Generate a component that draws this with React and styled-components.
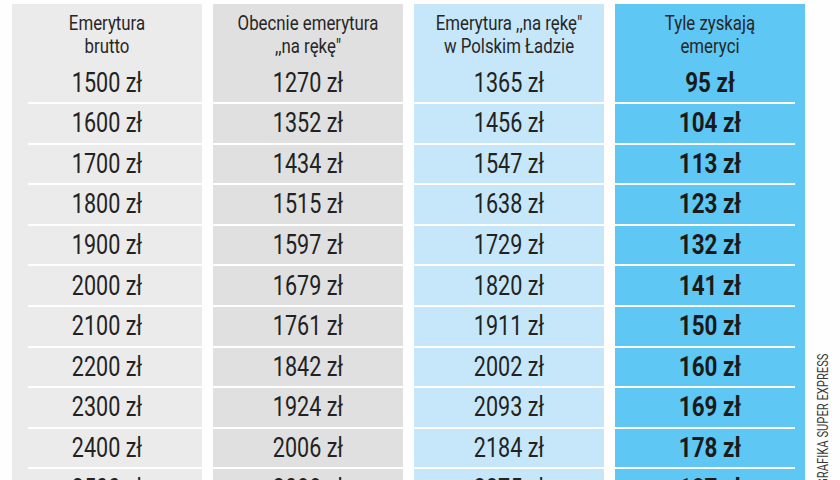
import React from "react";
import styled, { createGlobalStyle } from "styled-components";

const Global = createGlobalStyle`
  html, body {
    margin: 0;
    padding: 0;
    background: #fefefe;
    overflow: hidden;
  }
  body {
    font-family: Roboto, "Liberation Sans", sans-serif;
    color: #222;
  }
`;

const Page = styled.div`
  box-sizing: border-box;
  width: 840px;
  height: 480px;
  overflow: hidden;
  display: flex;
  align-items: flex-start;
  padding: 4px 0 0 12px;
`;

const Table = styled.div`
  display: grid;
  grid-template-columns: repeat(4, 190px);
  column-gap: 11px;
`;

const Column = styled.div`
  display: flex;
  flex-direction: column;
  background: ${(p) => p.$bg};
`;

const Header = styled.div`
  box-sizing: border-box;
  height: 59.4px;
  padding-top: 8px;
  text-align: center;
`;

const HeaderLine = styled.span`
  display: block;
  font-size: 20px;
  line-height: 23px;
  color: #262626;
  transform: scaleX(0.84);
`;

const Divider = styled.div`
  height: 2px;
  background: #ffffff;
  margin: 0 ${(p) => p.$right}px 0 ${(p) => p.$left}px;
`;

const Cell = styled.div`
  height: 38.6px;
  display: flex;
  align-items: center;
  justify-content: center;
`;

const Value = styled.span`
  display: block;
  width: 100%;
  text-align: center;
  font-size: 28px;
  line-height: 32px;
  font-weight: ${(p) => (p.$bold ? 700 : 400)};
  color: ${(p) => (p.$bold ? "#1a1a1a" : "#222")};
  transform: scaleX(${(p) => (p.$bold ? 0.8 : 0.77)});
`;

const Credit = styled.div`
  align-self: flex-end;
  margin: 0 0 -22px 11px;
  writing-mode: vertical-rl;
  transform: rotate(180deg) scaleY(0.8);
  font-size: 14px;
  line-height: 14px;
  color: #3a3a3a;
  white-space: nowrap;
`;

const rows = [
  ["1500 zł", "1270 zł", "1365 zł", "95 zł"],
  ["1600 zł", "1352 zł", "1456 zł", "104 zł"],
  ["1700 zł", "1434 zł", "1547 zł", "113 zł"],
  ["1800 zł", "1515 zł", "1638 zł", "123 zł"],
  ["1900 zł", "1597 zł", "1729 zł", "132 zł"],
  ["2000 zł", "1679 zł", "1820 zł", "141 zł"],
  ["2100 zł", "1761 zł", "1911 zł", "150 zł"],
  ["2200 zł", "1842 zł", "2002 zł", "160 zł"],
  ["2300 zł", "1924 zł", "2093 zł", "169 zł"],
  ["2400 zł", "2006 zł", "2184 zł", "178 zł"],
  ["2500 zł", "2088 zł", "2275 zł", "187 zł"],
];

const columns = [
  { header: ["Emerytura", "brutto"], bg: "#ebebeb", left: 16, right: 0 },
  { header: ["Obecnie emerytura", ",,na rękę\""], bg: "#e0e0e0", left: 0, right: 0 },
  { header: ["Emerytura ,,na rękę\"", "w Polskim Ładzie"], bg: "#c6e7fa", left: 0, right: 0 },
  { header: ["Tyle zyskają", "emeryci"], bg: "#5ec7f3", left: 0, right: 10, bold: true },
];

export default function App() {
  return (
    <>
      <Global />
      <Page>
        <Table>
          {columns.map((col, ci) => (
            <Column key={ci} $bg={col.bg}>
              <Header>
                {col.header.map((line) => (
                  <HeaderLine key={line}>{line}</HeaderLine>
                ))}
              </Header>
              {rows.map((row, ri) => (
                <React.Fragment key={ri}>
                  {ri > 0 && <Divider $left={col.left} $right={col.right} />}
                  <Cell>
                    <Value $bold={col.bold}>{row[ci]}</Value>
                  </Cell>
                </React.Fragment>
              ))}
            </Column>
          ))}
        </Table>
        <Credit>GRAFIKA SUPER EXPRESS</Credit>
      </Page>
    </>
  );
}
